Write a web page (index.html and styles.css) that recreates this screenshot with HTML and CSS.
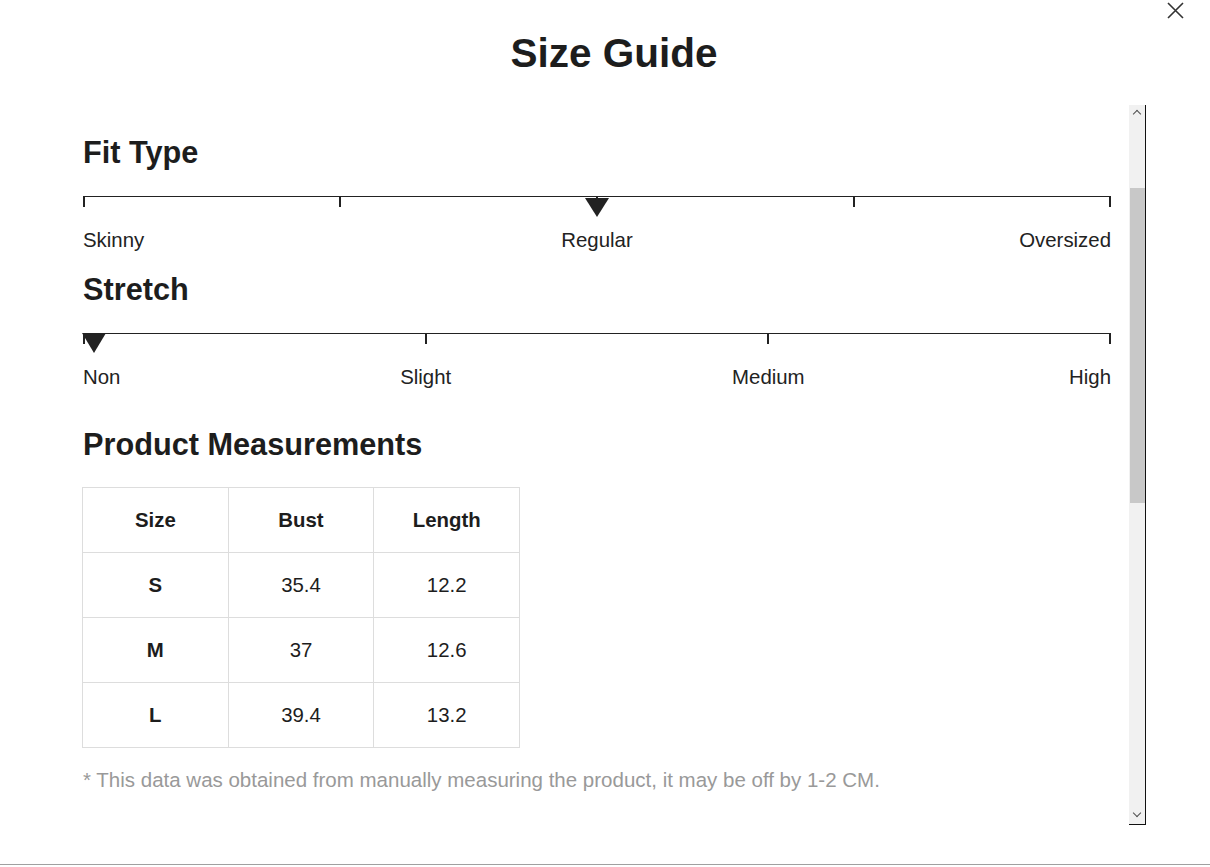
FILE: index.html
```html
<!DOCTYPE html>
<html>
<head>
<meta charset="utf-8">
<title>Size Guide</title>
<link rel="stylesheet" href="styles.css">
</head>
<body>
<div class="modal">
  <button class="close" aria-label="Close">
    <svg width="17" height="17" viewBox="0 0 17 17"><path d="M1 1L16 16M16 1L1 16" stroke="#333" stroke-width="1.6" fill="none"/></svg>
  </button>
  <h1 class="title">Size Guide</h1>
  <div class="body">
    <div class="content">
      <section class="fit">
        <h2 class="heading">Fit Type</h2>
        <div class="scale">
          <span class="tick tick-first"></span>
          <span class="tick" style="left:25%"></span>
          <span class="tick" style="left:50%"></span>
          <span class="tick" style="left:75%"></span>
          <span class="tick tick-last"></span>
          <span class="marker" style="left:50%"></span>
        </div>
        <div class="labels">
          <span class="label label-first">Skinny</span>
          <span class="label" style="left:50%">Regular</span>
          <span class="label label-last">Oversized</span>
        </div>
      </section>
      <section class="fit fit-second">
        <h2 class="heading">Stretch</h2>
        <div class="scale">
          <span class="tick tick-first"></span>
          <span class="tick" style="left:33.333%"></span>
          <span class="tick" style="left:66.667%"></span>
          <span class="tick tick-last"></span>
          <span class="marker marker-start"></span>
        </div>
        <div class="labels">
          <span class="label label-first">Non</span>
          <span class="label" style="left:33.333%">Slight</span>
          <span class="label" style="left:66.667%">Medium</span>
          <span class="label label-last">High</span>
        </div>
      </section>
      <section class="measure">
        <h2 class="heading">Product Measurements</h2>
        <table class="sizes">
          <thead>
            <tr><th>Size</th><th>Bust</th><th>Length</th></tr>
          </thead>
          <tbody>
            <tr><th>S</th><td>35.4</td><td>12.2</td></tr>
            <tr><th>M</th><td>37</td><td>12.6</td></tr>
            <tr><th>L</th><td>39.4</td><td>13.2</td></tr>
          </tbody>
        </table>
        <p class="note">* This data was obtained from manually measuring the product, it may be off by 1-2 CM.</p>
      </section>
    </div>
    <div class="scrollbar">
      <span class="arrow arrow-up"></span>
      <div class="track">
        <div class="thumb"></div>
      </div>
      <span class="arrow arrow-down"></span>
    </div>
  </div>
  <div class="bottom-line"></div>
</div>
</body>
</html>
```

FILE: styles.css
```css
* { box-sizing: border-box; }

html, body {
  margin: 0;
  padding: 0;
  background: #fff;
}

body {
  font-family: "Liberation Sans", Arial, Helvetica, sans-serif;
  color: #222;
}

.modal {
  position: relative;
  width: 1210px;
  height: 867px;
  overflow: hidden;
}

.close {
  position: absolute;
  top: 2px;
  right: 26px;
  width: 17px;
  height: 17px;
  padding: 0;
  border: 0;
  background: transparent;
  cursor: pointer;
}
.close svg { display: block; }

.title {
  margin: 0;
  padding: 33px 0 0 18px;
  font-size: 40.5px;
  line-height: 40px;
  font-weight: 700;
  text-align: center;
  color: #1d1d1d;
}

.body {
  display: flex;
  height: 720px;
  margin-top: 32px;
  margin-right: 64px;
}

.content {
  flex: 1;
  padding: 32px 18px 0 83px;
  overflow: hidden;
}

.heading {
  margin: 0 0 28px;
  padding-top: 1px;
  font-size: 30.7px;
  line-height: 30px;
  font-weight: 700;
  color: #1d1d1d;
}

.fit-second { margin-top: 23px; }

.scale {
  position: relative;
  height: 34px;
  border-top: 1px solid #222;
}

.tick {
  position: absolute;
  top: 0;
  width: 2px;
  height: 10px;
  background: #222;
  transform: translateX(-50%);
}
.tick-first { left: 0; transform: none; }
.tick-last { right: 0; transform: none; }

.marker {
  position: absolute;
  top: 1px;
  width: 0;
  height: 0;
  border-left: 12px solid transparent;
  border-right: 12px solid transparent;
  border-top: 19px solid #222;
  transform: translateX(-50%);
}
.marker-start {
  left: -1px;
  top: -1px;
  border-top-width: 20px;
  transform: none;
}

.labels {
  position: relative;
  height: 21px;
  font-size: 20.4px;
  line-height: 20px;
  color: #222;
}
.label {
  position: absolute;
  top: 0;
  white-space: nowrap;
  transform: translateX(-50%);
}
.label-first { left: 0; transform: none; }
.label-last { right: 0; transform: none; }

.measure { margin-top: 40.5px; }
.measure .heading { margin-bottom: 27px; }

.sizes {
  border-collapse: collapse;
  table-layout: fixed;
  width: 438px;
  margin-left: -1px;
  font-size: 20.4px;
}
.sizes th,
.sizes td {
  height: 65px;
  padding: 2px 0 0;
  border: 1px solid #ddd;
  text-align: center;
  vertical-align: middle;
  color: #1d1d1d;
}
.sizes th { font-weight: 700; }
.sizes td { font-weight: 400; }

.note {
  margin: 22px 0 0;
  font-size: 20.5px;
  line-height: 20px;
  color: #999;
}

.scrollbar {
  display: flex;
  flex-direction: column;
  width: 17px;
  background: #f1f1f1;
  border-right: 1px solid #111;
  border-bottom: 1px solid #111;
}
.arrow {
  position: relative;
  height: 17px;
  flex: none;
}
.arrow::before {
  content: "";
  position: absolute;
  left: 5px;
  width: 5px;
  height: 5px;
  border-left: 1.6px solid #505050;
  border-top: 1.6px solid #505050;
}
.arrow-up::before { top: 6px; transform: rotate(45deg); }
.arrow-down::before { top: 3px; transform: rotate(225deg); }

.track {
  flex: 1;
  padding-top: 66px;
}
.thumb {
  width: 15px;
  height: 315px;
  margin-left: 1px;
  background: #c8c8c8;
}

.bottom-line {
  position: absolute;
  left: 0;
  right: 0;
  top: 864px;
  height: 1px;
  background: #a0a0a0;
}
```
